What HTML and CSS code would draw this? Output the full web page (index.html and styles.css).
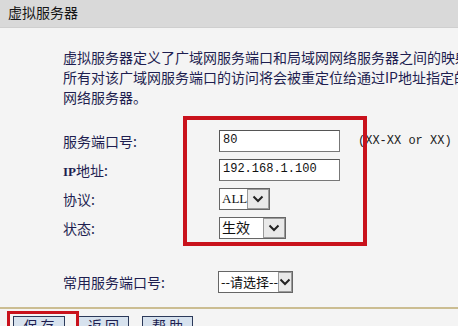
FILE: index.html
```html
<!DOCTYPE html>
<html lang="zh-CN">
<head>
<meta charset="UTF-8">
<title>虚拟服务器</title>
<link rel="stylesheet" href="styles.css">
</head>
<body>

<div class="page">
    <div class="title-bar">虚拟服务器</div>

    <div class="intro">
        <p>虚拟服务器定义了广域网服务端口和局域网网络服务器之间的映射关系，</p>
        <p>所有对该广域网服务端口的访问将会被重定位给通过IP地址指定的局域</p>
        <p>网络服务器。</p>
    </div>

    <div class="form">
        <div class="label">服务端口号:</div>
        <div class="field"><span class="text-input">80</span></div>
        <div class="hint">(XX-XX or XX)</div>

        <div class="label"><span class="latin">IP</span>地址:</div>
        <div class="field"><span class="text-input">192.168.1.100</span></div>
        <div class="hint"></div>

        <div class="label">协议:</div>
        <div class="field">
            <span class="select select-proto"><span class="select-value latin-serif">ALL</span><span class="select-arrow"><svg width="12" height="8" viewBox="0 0 12 8"><path d="M1.5 1.5 L6 6 L10.5 1.5" fill="none" stroke="#222" stroke-width="2"/></svg></span></span>
        </div>
        <div class="hint"></div>

        <div class="label">状态:</div>
        <div class="field">
            <span class="select select-state"><span class="select-value">生效</span><span class="select-arrow"><svg width="12" height="8" viewBox="0 0 12 8"><path d="M1.5 1.5 L6 6 L10.5 1.5" fill="none" stroke="#222" stroke-width="2"/></svg></span></span>
        </div>
        <div class="hint"></div>
    </div>

    <div class="form common">
        <div class="label">常用服务端口号:</div>
        <div class="field">
            <span class="select select-common"><span class="select-value">--请选择--</span><span class="select-arrow"><svg width="12" height="8" viewBox="0 0 12 8"><path d="M1.5 1.5 L6 6 L10.5 1.5" fill="none" stroke="#222" stroke-width="2"/></svg></span></span>
        </div>
        <div class="hint"></div>
    </div>

    <div class="divider"></div>

    <div class="buttons">
        <span class="btn">保 存</span>
        <span class="btn">返 回</span>
        <span class="btn">帮 助</span>
    </div>

    <!-- 红框标注 -->
    <div class="mark mark-fields"></div>
    <div class="mark mark-save"></div>
</div>

</body>
</html>
```

FILE: styles.css
```css
html, body {
    margin: 0;
    padding: 0;
    overflow: hidden;
}

body {
    background-color: #f4f4f4;
    font-family: "Noto Sans CJK SC", sans-serif;
    font-size: 14px;
    color: #1e1e50;
}

.page {
    position: relative;
    width: 458px;
    height: 326px;
    overflow: hidden;
}

.title-bar {
    height: 27px;
    line-height: 25px;
    padding-left: 8px;
    background-color: #d9d9d9;
    border-bottom: 1px solid #cfcfcf;
    color: #151515;
}

.intro {
    margin: 19px 0 0 63px;
    white-space: nowrap;
}

.intro p {
    margin: 0;
    height: 20px;
    line-height: 20px;
}

.form {
    display: grid;
    grid-template-columns: 156px 139px auto;
    grid-auto-rows: 29px;
    margin: 19px 0 0 63px;
    align-items: center;
}

.form.common {
    margin-top: 25px;
}

.label {
    white-space: nowrap;
}

.latin {
    font-family: "Liberation Serif", serif;
    font-weight: bold;
    font-size: 13px;
}

.latin-serif {
    font-family: "Liberation Serif", serif;
    font-size: 13px;
}

.hint {
    font-family: "Liberation Mono", monospace;
    font-size: 12px;
    color: #222;
    white-space: nowrap;
}

.text-input {
    display: block;
    box-sizing: border-box;
    width: 121px;
    height: 22px;
    line-height: 19px;
    padding-left: 3px;
    background-color: #fff;
    border: 1px solid #555;
    border-right-color: #777;
    border-bottom-color: #777;
    font-family: "Liberation Mono", monospace;
    font-size: 12px;
    color: #111;
}

.select {
    display: inline-flex;
    box-sizing: border-box;
    height: 22px;
    background-color: #fff;
    border: 1px solid #666;
    color: #111;
}

.select-value {
    flex: 1;
    line-height: 19px;
    padding-left: 2px;
    white-space: nowrap;
}

.select-arrow {
    display: flex;
    align-items: center;
    justify-content: center;
    box-sizing: border-box;
    width: 22px;
    background-color: #e9e9e9;
    border: 1px solid #9a9a9a;
}

.select-proto {
    width: 51px;
}

.select-state {
    width: 67px;
}

.select-common {
    width: 75px;
    margin-left: -1px;
    font-size: 13px;
}

.divider {
    margin-top: 11px;
    height: 2px;
    background-color: #cbbd92;
}

.buttons {
    display: flex;
    gap: 13px;
    margin: 7px 0 0 13px;
}

.btn {
    display: inline-block;
    box-sizing: border-box;
    width: 52px;
    height: 20px;
    line-height: 17px;
    text-align: center;
    background-color: #d7e2ee;
    border: 1px solid #2c3a5a;
    color: #1e1e50;
}

.btn + .btn {
    width: 51px;
}

.mark {
    position: absolute;
    box-sizing: border-box;
    border: 4px solid #c9121c;
}

.mark-fields {
    left: 183px;
    top: 116px;
    width: 184px;
    height: 130px;
}

.mark-save {
    left: 7px;
    top: 311px;
    width: 72px;
    height: 24px;
    border-width: 3px;
}
```
